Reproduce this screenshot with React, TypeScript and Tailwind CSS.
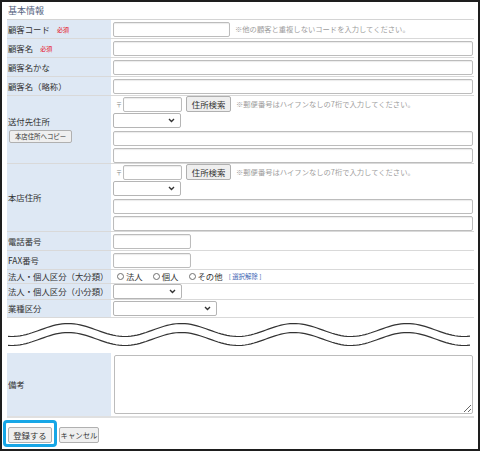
import React from 'react';

const FONT = '"Noto Sans CJK JP", "Noto Sans", sans-serif';

// sine wave for the "omitted rows" break
function wavePath(offsetY: number) {
  const pts: string[] = [];
  for (let x = 1; x <= 465; x += 3) {
    const y = offsetY - 6.5 * Math.sin((2 * Math.PI * (x + 7 - 40)) / 113);
    pts.push(`${x === 1 ? 'M' : 'L'}${x},${y.toFixed(2)}`);
  }
  return pts.join(' ');
}

function Required() {
  return <span className="ml-[7px] text-[6px] text-[#e60012]">必須</span>;
}

function TextInput({ w }: { w?: string }) {
  return (
    <div
      className={`h-[15px] shrink-0 rounded-[2px] border border-[#bcbcbc] bg-white shadow-[inset_0_1px_1px_rgba(0,0,0,0.08)] ${w ?? 'w-full'}`}
    />
  );
}

function Select({ w }: { w: string }) {
  return (
    <div className={`relative h-[15px] shrink-0 rounded-[2px] border border-[#b5b5b5] bg-white ${w}`}>
      <svg className="absolute right-[5px] top-[4px] h-[5px] w-[7px]" viewBox="0 0 7 5" fill="none">
        <path d="M1 1l2.5 2.5L6 1" stroke="#333" strokeWidth={1.4} />
      </svg>
    </div>
  );
}

function SmallButton({ children, className }: { children: React.ReactNode; className?: string }) {
  return (
    <div
      className={`flex shrink-0 items-center justify-center whitespace-nowrap rounded-[2px] border border-[#b0b0b0] bg-[#efefef] text-[#333] ${className ?? ''}`}
    >
      {children}
    </div>
  );
}

function Note({ children }: { children: React.ReactNode }) {
  return <span className="ml-[5px] whitespace-nowrap text-[7.3px] text-[#9d9d9d]">{children}</span>;
}

function Row({
  label,
  h,
  children,
}: {
  label: React.ReactNode;
  h: string;
  children: React.ReactNode;
}) {
  return (
    <div className={`flex border-b border-[#d9d9d9] ${h}`}>
      <div className="flex w-[105px] shrink-0 items-center whitespace-nowrap border-r border-white bg-[#dee8f4] pl-[1px] text-[8.4px] text-[#333]">
        {label}
      </div>
      <div className="flex min-w-0 flex-1 flex-col justify-center gap-[1px] pl-[1px] pr-[1px]">{children}</div>
    </div>
  );
}

function PostalRow() {
  return (
    <div className="flex h-[16px] items-center">
      <span className="ml-[3px] mr-[1px] text-[6px] text-[#888]">〒</span>
      <TextInput w="w-[59px]" />
      <SmallButton className="ml-[4px] h-[16px] w-[45px] text-[8.4px]">住所検索</SmallButton>
      <Note>※郵便番号はハイフンなしの7桁で入力してください。</Note>
    </div>
  );
}

function AddressFields() {
  return (
    <>
      <PostalRow />
      <Select w="w-[68px]" />
      <div className="h-[1px]" />
      <TextInput />
      <div className="h-[1px]" />
      <TextInput />
    </>
  );
}

function Radio({ label }: { label: string }) {
  return (
    <span className="mr-[10px] flex items-center">
      <span className="h-[7px] w-[7px] rounded-full border border-[#707070] bg-white" />
      <span className="ml-[2px]">{label}</span>
    </span>
  );
}

export default function App() {
  return (
    <div
      className="h-[451px] w-[480px] overflow-hidden border-2 border-[#1e1e1e] bg-white"
      style={{ fontFamily: FONT }}
    >
      <div className="pl-[5px] pr-[4px]">
        {/* Title */}
        <div className="flex h-[18px] items-center border-b border-[#d4d4d4] pl-[1px] pt-[1px] text-[9px] text-[#53627e]">
          基本情報
        </div>

        <Row label={<>顧客コード<Required /></>} h="h-[19px]">
          <div className="flex items-center">
            <TextInput w="w-[117px]" />
            <Note>※他の顧客と重複しないコードを入力してください。</Note>
          </div>
        </Row>
        <Row label={<>顧客名<Required /></>} h="h-[19px]">
          <TextInput />
        </Row>
        <Row label="顧客名かな" h="h-[19px]">
          <TextInput />
        </Row>
        <Row label="顧客名（略称）" h="h-[19px]">
          <TextInput />
        </Row>

        <Row
          label={
            <div className="flex flex-col items-start">
              <span className="leading-[11px]">送付先住所</span>
              <SmallButton className="ml-[1px] mt-[3px] h-[13px] w-[63px] text-[6.4px]">本店住所へコピー</SmallButton>
            </div>
          }
          h="h-[68px]"
        >
          <AddressFields />
        </Row>
        <Row label="本店住所" h="h-[68px]">
          <AddressFields />
        </Row>

        <Row label="電話番号" h="h-[19px]">
          <TextInput w="w-[78px]" />
        </Row>
        <Row label="FAX番号" h="h-[19px]">
          <TextInput w="w-[78px]" />
        </Row>
        <Row label="法人・個人区分（大分類）" h="h-[14px]">
          <div className="flex items-center pl-[4px] text-[8.4px] text-[#333]">
            <Radio label="法人" />
            <Radio label="個人" />
            <Radio label="その他" />
            <span className="-ml-[4px] text-[6.4px] text-[#3b64b3]">[ 選択解除 ]</span>
          </div>
        </Row>
        <Row label="法人・個人区分（小分類）" h="h-[16px]">
          <Select w="w-[69px]" />
        </Row>
        <Row label="業種区分" h="h-[18px]">
          <Select w="w-[104px]" />
        </Row>

        {/* omitted rows */}
        <div className="h-[35px]">
          <svg width="466" height="35" viewBox="0 0 466 35" fill="none">
            <path d={wavePath(12)} stroke="#333" strokeWidth={1.2} />
            <path d={wavePath(21)} stroke="#333" strokeWidth={1.2} />
          </svg>
        </div>

        <div className="flex h-[65px] border-b-2 border-[#e0e0e0]">
          <div className="flex w-[105px] shrink-0 items-center border-r border-white bg-[#dee8f4] pl-[1px] text-[8.4px] text-[#333]">
            備考
          </div>
          <div className="flex flex-1 items-center pl-[2px] pr-[1px]">
            <textarea
              readOnly
              className="h-[59px] w-full resize-y rounded-[2px] border border-[#bcbcbc] bg-white outline-none"
            />
          </div>
        </div>
      </div>

      {/* Buttons */}
      <div className="mt-[2px] flex items-center pl-[1px]">
        <div className="rounded-[4px] border-[3px] border-[#16a6e6] px-[2px] pb-[1px] pt-[4px]">
          <SmallButton className="h-[16px] w-[44px] text-[8.4px]">登録する</SmallButton>
        </div>
        <SmallButton className="ml-[2px] mt-[2px] h-[16px] w-[40px] text-[7.4px]">キャンセル</SmallButton>
      </div>
    </div>
  );
}
